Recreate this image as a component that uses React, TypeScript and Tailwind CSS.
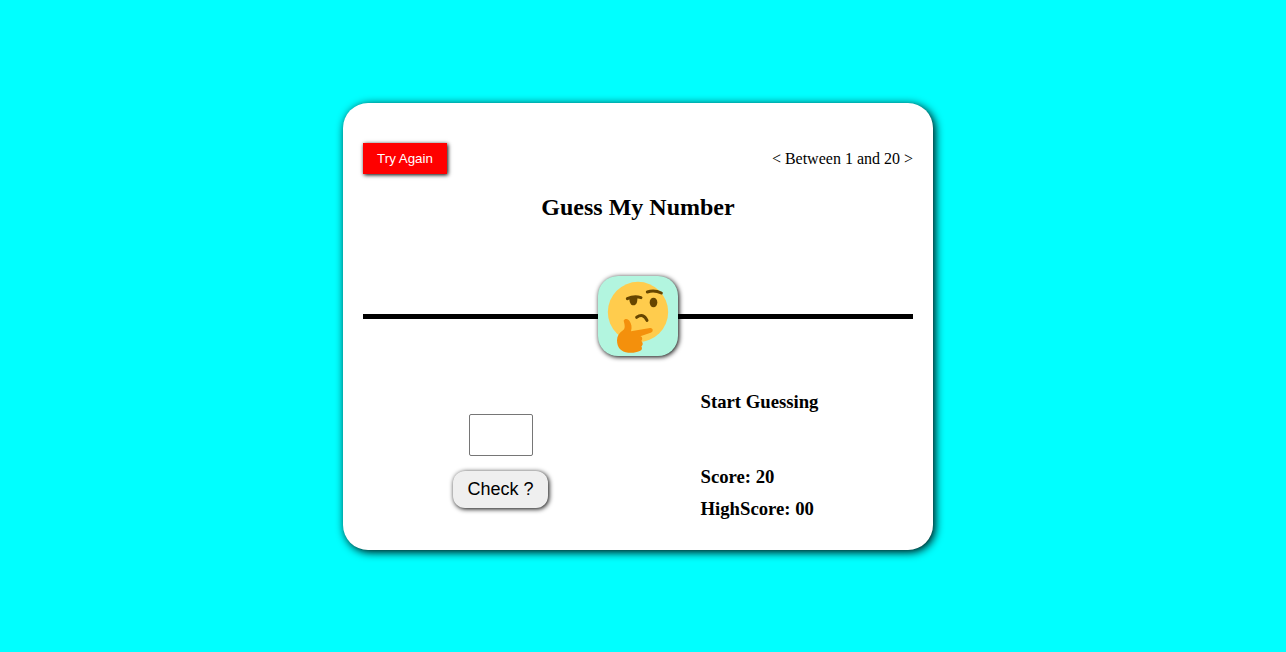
import { useState } from "react";

function ThinkingFace() {
  return (
    <svg viewBox="24 24 240 240" className="block h-20 w-20" role="img" aria-label="Thinking face">
      <circle cx="144" cy="132" r="90.5" fill="#ffcc4d" />
      <path d="M118 89 L142 87 C143 103 139 112 130.500 112 C122 112 118 103 118 89 Z" fill="#664500" />
      <ellipse cx="190.500" cy="103.500" rx="11.500" ry="14.500" fill="#664500" />
      <path d="M112 92 Q132 83 153 89" fill="none" stroke="#664500" strokeWidth="9" strokeLinecap="round" />
      <path d="M172 72 Q193 65 214 75" fill="none" stroke="#664500" strokeWidth="9" strokeLinecap="round" />
      <path d="M140 148 Q160 134 171 157" fill="none" stroke="#664500" strokeWidth="9" strokeLinecap="round" />
      <path
        d="M101 158 C103 151 113 151 118 158 C124 167 127 177 123 190 L180 180 C190 179 191 192 182 194 L151 205 C158 206 158 215 154 219 C160 224 159 232 154 235 C158 242 155 248 149 249 C139 252 130 256 115 254 C93 252 81 239 81 217 C81 204 88 194 99 187 C107 180 104 170 101 158 Z"
        fill="#f4900c"
      />
    </svg>
  );
}

export default function App() {
  const [guess, setGuess] = useState("");

  return (
    <div className="flex h-[652px] items-start justify-center overflow-hidden bg-[#00ffff] pr-[10px] pt-[103px] font-['Liberation_Serif',serif] text-black">
      <main className="h-[447px] w-[590px] rounded-[25px] bg-white px-5 pt-10 shadow-[2px_2px_10px_black]">
        <header className="flex items-center justify-between">
          <button className="h-[31px] w-[84px] bg-[#ff0000] font-['Liberation_Sans',sans-serif] text-[13.333px] text-white shadow-[1px_1px_4px_black]">
            Try Again
          </button>
          <p className="text-base leading-[18px]">&lt; Between 1 and 20 &gt;</p>
        </header>
        <h1 className="mt-5 text-center text-2xl font-bold leading-[27px]">Guess My Number</h1>
        <div className="mt-[55px] flex items-center">
          <div className="h-[5px] flex-1 bg-black" />
          <div className="h-20 w-20 overflow-hidden rounded-[20px] bg-[#b2f5df] shadow-[1px_1px_5px_black]">
            <ThinkingFace />
          </div>
          <div className="h-[5px] flex-1 bg-black" />
        </div>
        <div className="flex">
          <div className="flex w-[275px] flex-col items-center pt-[58px]">
            <input
              aria-label="Your guess"
              value={guess}
              onChange={(e) => setGuess(e.target.value)}
              className="h-[42px] w-16 rounded-[2px] border border-[#767676] bg-white text-center text-lg"
            />
            <button className="mt-[15px] h-[37px] w-[95px] rounded-[12px] bg-[#efefef] pb-[2px] font-['Liberation_Sans',sans-serif] text-lg shadow-[1px_1px_5px_black]">
              Check ?
            </button>
          </div>
          <div className="pl-[62.5px] pt-9 text-[18.72px] font-bold leading-5">
            <p>Start Guessing</p>
            <p className="mt-[55px]">Score: 20</p>
            <p className="mt-3">HighScore: 00</p>
          </div>
        </div>
      </main>
    </div>
  );
}
